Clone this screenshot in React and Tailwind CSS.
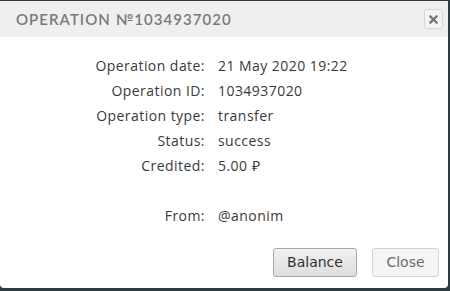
import React from "react";

const rows = [
  ["Operation date:", "21 May 2020 19:22"],
  ["Operation ID:", "1034937020"],
  ["Operation type:", "transfer"],
  ["Status:", "success"],
  ["Credited:", "5.00 ₽"],
  ["", ""],
  ["From:", "@anonim"],
];

export default function App() {
  return (
    <div className="h-[291px] w-[450px] bg-[#2e3a40] pt-[1px] pr-[2px] pb-[3px]">
      <div className="h-full bg-white rounded-b-[4px] flex flex-col overflow-hidden">
        <div className="h-[36px] bg-[#efefef] flex items-center justify-between pl-[16px] pr-[5px]">
          <h2 className="text-[15px] tracking-[1.05px] text-[#7a7a7a] font-semibold" style={{ fontFamily: "Lato, sans-serif" }}>
            OPERATION №1034937020
          </h2>
          <button className="w-[19px] h-[20px] rounded-[3px] border border-[#d6d6d6] bg-[#f4f4f4] flex items-center justify-center">
            <svg width="9" height="9" viewBox="0 0 9 9">
              <path d="M1.5 1.5 L7.5 7.5 M7.5 1.5 L1.5 7.5" stroke="#777" strokeWidth="2.4" strokeLinecap="square" />
            </svg>
          </button>
        </div>

        <div className="grid grid-cols-[205px_1fr] gap-x-[13px] pt-[16px] text-[14px] tracking-[0.45px] leading-[25px] text-[#3a3a3a]" style={{ fontFamily: "'Open Sans', sans-serif" }}>
          {rows.map(([label, value], i) => (
            <React.Fragment key={i}>
              <div className="text-right h-[25px]">{label}</div>
              <div className="h-[25px]">{value}</div>
            </React.Fragment>
          ))}
        </div>

        <div className="flex justify-end gap-[15px] pr-[9px] mt-[20px] text-[14px]" style={{ fontFamily: "'DejaVu Sans', sans-serif" }}>
          <button className="w-[84px] h-[29px] rounded-[3px] border border-[#a9a9a9] bg-gradient-to-b from-[#f0f0f0] to-[#dedede] text-[#333]">
            Balance
          </button>
          <button className="w-[67px] h-[29px] rounded-[3px] border border-[#d4d4d4] bg-[#f5f5f5] text-[#6a6a6a]">
            Close
          </button>
        </div>
      </div>
    </div>
  );
}
